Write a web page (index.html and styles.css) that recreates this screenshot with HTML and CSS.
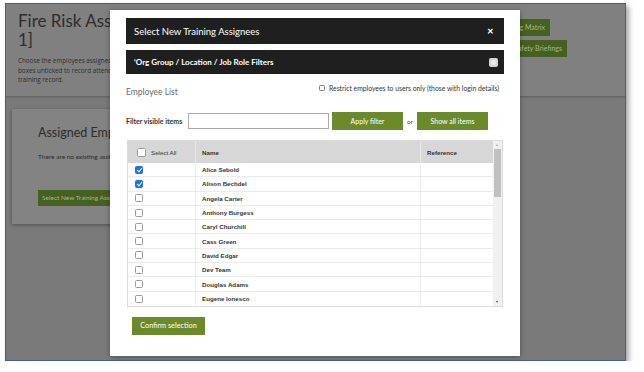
FILE: index.html
```html
<!DOCTYPE html>
<html lang="en">
<head>
    <meta charset="UTF-8">
    <title>Select New Training Assignees</title>
    <link rel="stylesheet" href="styles.css">
</head>
<body>
    <div class="shot">
        <div class="page">
            <div class="page-head">
                <div class="page-intro">
                    <h1 class="page-title">Fire Risk Assessment Training [Level<br>1]</h1>
                    <p class="page-text">Choose the employees assigned to this course and tick the<br>boxes unticked to record attendance at a later date on the<br>training record.</p>
                </div>
                <div class="page-actions">
                    <a class="dim-button first">Training Matrix</a>
                    <a class="dim-button">Toolbox Safety Briefings</a>
                </div>
            </div>
            <div class="card">
                <div class="card-body">
                    <h2 class="card-title">Assigned Employees</h2>
                    <p class="card-text">There are no existing assignees for this training course.</p>
                    <a class="dim-button card-button">Select New Training Assignees</a>
                </div>
            </div>
        </div>

        <div class="modal">
            <div class="modal-bar">
                <span>Select New Training Assignees</span>
                <span class="close">&#x2715;</span>
            </div>
            <div class="modal-bar filter-bar">
                <span>&lsquo;Org Group / Location / Job Role Filters</span>
                <span class="toggle"><span></span></span>
            </div>

            <div class="list-head">
                <span class="list-title">Employee List</span>
                <label class="restrict"><span class="box small"></span>Restrict employees to users only (those with login details)</label>
            </div>

            <div class="filter-row">
                <span class="filter-label">Filter visible items</span>
                <span class="filter-input"></span>
                <span class="btn">Apply filter</span>
                <span class="or">or</span>
                <span class="btn">Show all items</span>
            </div>

            <div class="emp-table">
                <div class="emp-grid">
                    <div class="emp-row emp-header">
                        <div class="cell c-check"><span class="box big"></span>Select All</div>
                        <div class="cell c-name">Name</div>
                        <div class="cell c-ref">Reference</div>
                    </div>
                    <div id="emp-rows"></div>
                </div>
                <div class="scrollbar">
                    <span class="arrow up"></span>
                    <span class="thumb"></span>
                    <span class="arrow down"></span>
                </div>
            </div>

            <span class="btn confirm">Confirm selection</span>
        </div>
    </div>

    <script>
        const employees = [
            ["Alice Sebold", true],
            ["Alison Bechdel", true],
            ["Angela Carter", false],
            ["Anthony Burgess", false],
            ["Caryl Churchill", false],
            ["Cass Green", false],
            ["David Edgar", false],
            ["Dev Team", false],
            ["Douglas Adams", false],
            ["Eugene Ionesco", false]
        ];

        const rows = document.getElementById('emp-rows');
        employees.forEach(([name, checked]) => {
            const row = document.createElement('div');
            row.className = 'emp-row';
            row.innerHTML = `
                <div class="cell c-check"><span class="box ${checked ? 'checked' : ''}"></span></div>
                <div class="cell c-name">${name}</div>
                <div class="cell c-ref"></div>
            `;
            rows.appendChild(row);
        });
    </script>
</body>
</html>
```

FILE: styles.css
```css
* {
    margin: 0;
    padding: 0;
    box-sizing: border-box;
}

body {
    font-family: Lato, "Liberation Sans", Arial, sans-serif;
    background-color: #fff;
    padding: 3px 0 0 5px;
}

.shot {
    position: relative;
    width: 621px;
    height: 358px;
    border: 1px solid #3f5d9c;
    background-color: #7a7a7a;
    box-shadow: 3px 3px 5px rgba(0, 0, 0, 0.35);
    overflow: hidden;
}

/* dimmed page behind the dialog (only the parts left of / right of it are drawn) */
.page-head {
    display: flex;
    justify-content: space-between;
    height: 92px;
    padding: 7px 58px 0 12px;
    background-color: #808080;
    box-shadow: 0 1px 2px rgba(0, 0, 0, 0.25);
}

.page-intro {
    width: 92px;
    overflow: hidden;
}

.page-title {
    font-size: 17px;
    font-weight: normal;
    line-height: 19px;
    color: #2e2e2e;
    white-space: nowrap;
}

.page-text {
    margin-top: 7px;
    font-family: "Open Sans", sans-serif;
    font-size: 6.3px;
    line-height: 9.6px;
    color: #2e2e2e;
    white-space: nowrap;
}

.page-actions {
    display: flex;
    flex-direction: column;
    align-items: flex-end;
    gap: 4px;
    width: 47px;
    padding-top: 8px;
    overflow: hidden;
}

.dim-button {
    display: inline-block;
    padding: 0 5px;
    height: 17px;
    line-height: 17px;
    background-color: #45601f;
    color: #a9b590;
    font-size: 7px;
    white-space: nowrap;
}

.dim-button.first {
    margin-right: 17px;
}

.card {
    margin: 13px 0 0 6px;
    width: 400px;
    height: 115px;
    padding: 16px 0 0 26px;
    background-color: #838383;
    box-shadow: 0 1px 4px rgba(0, 0, 0, 0.35);
}

.card-body {
    width: 72px;
    overflow: hidden;
}

.card-title {
    font-size: 12.5px;
    font-weight: normal;
    color: #2c2c2c;
    white-space: nowrap;
}

.card-text {
    margin-top: 13px;
    font-size: 6.5px;
    color: #2c2c2c;
    white-space: nowrap;
}

.card-button {
    margin-top: 30px;
    height: 16px;
    line-height: 16px;
    padding: 0 4px;
    font-size: 6.5px;
}

/* dialog */
.modal {
    position: absolute;
    left: 104px;
    top: 6px;
    width: 410px;
    height: 346px;
    padding: 8px 16px;
    background-color: #fff;
    box-shadow: 0 1px 5px rgba(0, 0, 0, 0.35);
}

.modal-bar {
    display: flex;
    justify-content: space-between;
    align-items: center;
    height: 26px;
    padding: 0 10px 0 8px;
    background-color: #1f1f1f;
    color: #fff;
    font-size: 9.5px;
}

.close {
    font-size: 8px;
    font-weight: bold;
}

.filter-bar {
    height: 24px;
    margin-top: 6px;
    font-size: 8px;
    font-weight: bold;
    padding-right: 6px;
}

.toggle {
    width: 9px;
    height: 9px;
    border-radius: 2px;
    background-color: #d6d6d6;
    display: flex;
    align-items: center;
    justify-content: center;
}

.toggle span {
    width: 5px;
    height: 5px;
    border-radius: 50%;
    background-color: #ececec;
}

.list-head {
    display: flex;
    justify-content: space-between;
    align-items: flex-start;
    height: 12px;
    margin-top: 10px;
    padding-right: 5px;
}

.list-title {
    padding-top: 3px;
    font-size: 8.5px;
    color: #6a6a6a;
}

.restrict {
    display: flex;
    align-items: center;
    gap: 4px;
    font-size: 6.8px;
    color: #333;
}

.box {
    display: inline-block;
    width: 8px;
    height: 8px;
    border: 1px solid #9a9a9a;
    border-radius: 1.5px;
    background-color: #fff;
    position: relative;
}

.box.small {
    width: 6px;
    height: 6px;
    border-color: #777;
}

.box.big {
    width: 9px;
    height: 9px;
    margin-right: 5px;
}

.box.checked {
    background-color: #1a73e8;
    border-color: #1a73e8;
}

.box.checked::after {
    content: "";
    position: absolute;
    left: 2px;
    top: 0;
    width: 2px;
    height: 4px;
    border: solid #fff;
    border-width: 0 1px 1px 0;
    transform: rotate(40deg);
}

.filter-row {
    display: flex;
    align-items: center;
    height: 18px;
    margin-top: 16px;
}

.filter-label {
    width: 62px;
    font-size: 7px;
    font-weight: bold;
    color: #333;
}

.filter-input {
    width: 141px;
    height: 16px;
    border: 1px solid #aaa;
}

.btn {
    display: inline-flex;
    align-items: center;
    justify-content: center;
    width: 71px;
    height: 18px;
    background-color: #6b8b2a;
    color: #fff;
    font-size: 7px;
}

.filter-input + .btn {
    margin-left: 3px;
}

.or {
    width: 14px;
    text-align: center;
    font-size: 6.5px;
    color: #444;
}

.emp-table {
    display: flex;
    width: 376px;
    margin: 10px 0 0 1px;
    border: 1px solid #dcdcdc;
}

.emp-grid {
    flex: 1;
}

.emp-row {
    display: flex;
    height: 14.3px;
    border-bottom: 1px solid #ebebeb;
}

.emp-row:last-child {
    border-bottom: none;
}

.emp-header {
    height: 22px;
    background-color: #d7d7d7;
    border-bottom: none;
}

.cell {
    display: flex;
    align-items: center;
    font-family: "Liberation Sans", Arial, sans-serif;
    font-size: 6.2px;
    font-weight: bold;
    color: #333;
    white-space: nowrap;
}

.c-check {
    width: 68px;
    padding-left: 7px;
    border-right: 1px solid #ebebeb;
    font-weight: normal;
}

.emp-header .c-check {
    padding-left: 9px;
    border-right-color: #e6e6e6;
}

.c-name {
    width: 225px;
    padding-left: 6px;
    border-right: 1px solid #ebebeb;
}

.c-ref {
    flex: 1;
    padding-left: 6px;
}

.scrollbar {
    position: relative;
    width: 9px;
    background-color: #f0f0f0;
}

.thumb {
    position: absolute;
    left: 1px;
    top: 8px;
    width: 7px;
    height: 48px;
    background-color: #c1c1c1;
}

.arrow {
    position: absolute;
    left: 3px;
    width: 0;
    height: 0;
    border-left: 1.5px solid transparent;
    border-right: 1.5px solid transparent;
}

.arrow.up {
    top: 3px;
    border-bottom: 2px solid #a3a3a3;
}

.arrow.down {
    bottom: 3px;
    border-top: 2px solid #505050;
}

.confirm {
    margin: 10px 0 0 6px;
    width: 73px;
    font-size: 7.3px;
}
```
